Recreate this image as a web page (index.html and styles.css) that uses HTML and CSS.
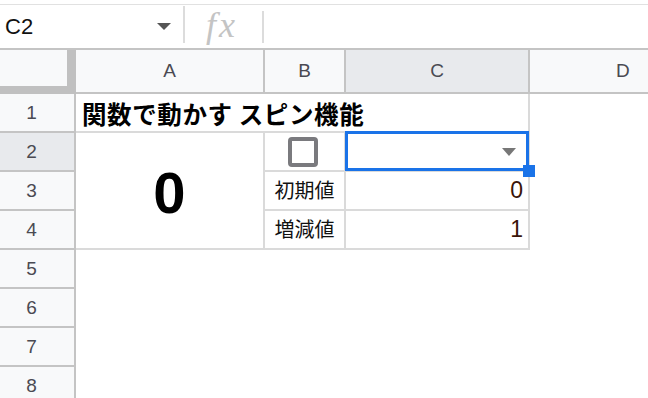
FILE: index.html
```html
<!DOCTYPE html>
<html>
<head>
    <meta name="viewport" content="width=device-width, initial-scale=1.0">
    <link rel="stylesheet" href="styles.css">
</head>
<body>
    <div class="formula-bar">
        <div class="name-box">
            <span class="cell-ref">C2</span>
            <span class="name-arrow"></span>
        </div>
        <div class="bar-sep"></div>
        <div class="fx">fx</div>
        <div class="bar-sep short"></div>
        <div class="formula-input"></div>
    </div>

    <div class="sheet">
        <!-- column headers -->
        <div class="corner"></div>
        <div class="col-head">A</div>
        <div class="col-head">B</div>
        <div class="col-head selected">C</div>
        <div class="col-head last">D</div>

        <!-- row headers -->
        <div class="row-head r1">1</div>
        <div class="row-head r2 selected">2</div>
        <div class="row-head r3">3</div>
        <div class="row-head r4">4</div>
        <div class="row-head r5">5</div>
        <div class="row-head r6">6</div>
        <div class="row-head r7">7</div>
        <div class="row-head r8">8</div>

        <!-- data -->
        <div class="cell title">関数で動かす スピン機能</div>
        <div class="cell counter">0</div>
        <div class="cell check-cell">
            <span class="checkbox"></span>
        </div>
        <div class="cell select-cell">
            <span class="select-arrow"></span>
            <div class="selection">
                <span class="fill-handle"></span>
            </div>
        </div>
        <div class="cell label r3">初期値</div>
        <div class="cell number r3">0</div>
        <div class="cell label r4">増減値</div>
        <div class="cell number r4">1</div>
    </div>
</body>
</html>
```

FILE: styles.css
```css
body {
    margin: 0;
    background-color: #fff;
    font-family: "Liberation Sans", Arial, "Noto Sans CJK JP", sans-serif;
    color: #000;
    overflow: hidden;
}

/* formula bar */

.formula-bar {
    margin-top: 4px;
    height: 44px;
    box-sizing: border-box;
    border-top: 1px solid #e1e1e1;
    display: flex;
    align-items: flex-start;
}

.name-box {
    width: 183px;
    height: 43px;
    display: flex;
    align-items: center;
    padding-left: 5px;
    padding-right: 12px;
    box-sizing: border-box;
}

.cell-ref {
    font-size: 22px;
    color: #111;
}

.name-arrow {
    margin-left: auto;
    width: 0;
    height: 0;
    border-left: 7px solid transparent;
    border-right: 7px solid transparent;
    border-top: 7px solid #555;
}

.bar-sep {
    width: 2px;
    height: 37px;
    margin-top: 1px;
    background-color: #dcdcdc;
}

.bar-sep.short {
    height: 32px;
    margin-top: 6px;
}

.fx {
    width: 56px;
    padding-left: 21px;
    height: 43px;
    line-height: 40px;
    font-family: "Liberation Serif", "Times New Roman", serif;
    font-style: italic;
    font-size: 36px;
    letter-spacing: 3px;
    color: #c4c4c4;
}

.formula-input {
    flex: 1;
}

/* grid */

.sheet {
    display: grid;
    grid-template-columns: 76px 189px 81px 184px 1fr;
    grid-template-rows: 44px repeat(8, 39px);
    border-top: 2px solid #c4c4c4;
}

.corner {
    background-color: #f8f9fa;
    border-right: 9px solid #c0c0c0;
    border-bottom: 8px solid #c0c0c0;
}

.col-head {
    display: flex;
    align-items: center;
    justify-content: center;
    background-color: #f8f9fa;
    border-right: 2px solid #c4c4c4;
    border-bottom: 2px solid #c4c4c4;
    font-size: 19px;
    color: #4a4a52;
}

.col-head.last {
    border-right: none;
    justify-content: flex-start;
    padding-left: 86px;
}

.col-head.selected,
.row-head.selected {
    background-color: #e8eaed;
}

.row-head {
    grid-column: 1;
    display: flex;
    align-items: center;
    justify-content: center;
    padding-right: 11px;
    background-color: #f8f9fa;
    border-right: 2px solid #c4c4c4;
    border-bottom: 2px solid #c4c4c4;
    font-size: 19px;
    color: #4a4a52;
}

.r1 { grid-row: 2; }
.r2 { grid-row: 3; }
.r3 { grid-row: 4; }
.r4 { grid-row: 5; }
.r5 { grid-row: 6; }
.r6 { grid-row: 7; }
.r7 { grid-row: 8; }
.r8 { grid-row: 9; }

.cell {
    border-right: 2px solid #dadada;
    border-bottom: 2px solid #dadada;
    display: flex;
    align-items: center;
    min-width: 0;
}

.title {
    grid-column: 2 / 5;
    grid-row: 2;
    padding-left: 6px;
    padding-top: 1px;
    font-family: "Noto Sans CJK JP", sans-serif;
    font-weight: bold;
    font-size: 24.5px;
    letter-spacing: 0.6px;
    white-space: nowrap;
}

.counter {
    grid-column: 2;
    grid-row: 3 / 6;
    justify-content: center;
    padding-top: 3px;
    font-weight: bold;
    font-size: 58px;
}

.check-cell {
    grid-column: 3;
    grid-row: 3;
    justify-content: center;
    padding-right: 4px;
}

.checkbox {
    width: 30px;
    height: 30px;
    box-sizing: border-box;
    border: 4px solid #7a7a7e;
    border-radius: 4px;
}

.select-cell {
    grid-column: 4;
    grid-row: 3;
    justify-content: flex-end;
    padding-right: 12px;
    position: relative;
}

.select-arrow {
    width: 0;
    height: 0;
    border-left: 7px solid transparent;
    border-right: 7px solid transparent;
    border-top: 8px solid #777;
}

.selection {
    position: absolute;
    left: -1px;
    top: -2px;
    right: -1px;
    bottom: -1px;
    border: 3px solid #1a73e8;
}

.fill-handle {
    position: absolute;
    right: -9px;
    bottom: -9px;
    width: 12px;
    height: 12px;
    background-color: #1a73e8;
}

.label {
    grid-column: 3;
    justify-content: center;
    align-items: flex-end;
    padding-bottom: 5px;
    font-family: "Noto Sans CJK JP", sans-serif;
    font-size: 20px;
    color: #111;
}

.number {
    grid-column: 4;
    justify-content: flex-end;
    align-items: flex-end;
    padding-right: 5px;
    padding-bottom: 5px;
    font-size: 23px;
    color: #3a1408;
}
```
